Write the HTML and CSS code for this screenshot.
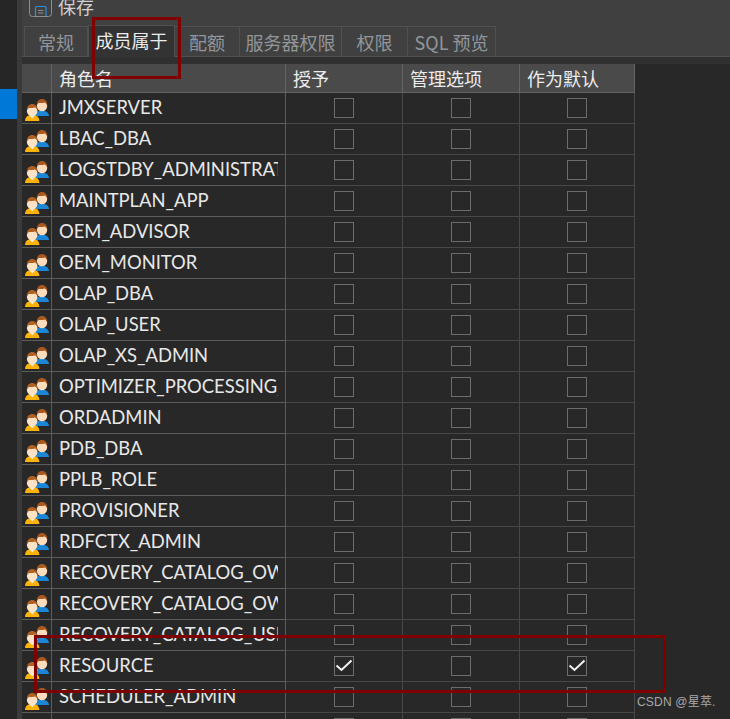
FILE: index.html
```html
<!DOCTYPE html>
<html lang="zh">
<head>
<meta charset="utf-8">
<title>成员属于</title>
<link rel="stylesheet" href="styles.css">
</head>
<body>
<svg width="0" height="0" class="defs">
  <defs>
    <symbol id="role" viewBox="0 0 24 22">
      <path d="M10 17 C10.5 13.5 13 11.5 17 11.5 C21 11.5 23.6 13.8 24 17Z" fill="#1c86d6"/>
      <circle cx="17" cy="7" r="5.2" fill="#fbdcbc"/>
      <path d="M11.8 6.6 C11.4 2.4 14 0 17 0 C20.2 0 22.6 2.4 22.2 6.6 C21.6 4.8 20.6 3.8 19.4 3.6 C17.6 4.2 14.8 4.2 13.8 3.9 C12.8 4.4 12.2 5.2 11.8 6.6Z" fill="#a8571f"/>
      <path d="M0 22 C0.2 18 3 15.8 7.2 15.8 C11.4 15.8 14.2 18 14.4 22Z" fill="#ffb30a"/>
      <path d="M4.4 16.4 L7.2 19.2 L10 16.4Z" fill="#fff3e0"/>
      <circle cx="7.2" cy="12" r="5.3" fill="#fce2c6"/>
      <path d="M1.9 11.6 C1.5 7.4 4.2 5 7.2 5 C10.4 5 12.9 7.4 12.5 11.6 C11.9 9.8 10.9 8.8 9.6 8.6 C7.8 9.2 5.2 9.2 4 8.9 C3 9.4 2.4 10.2 1.9 11.6Z" fill="#b0601f"/>
    </symbol>
  </defs>
</svg>
<div class="app">
  <aside class="rail"><div class="rail-mark"></div></aside>
  <div class="gutter"></div>
  <main class="main">
    <div class="toolbar">
      <svg class="save" viewBox="0 0 23 23" width="23" height="23" fill="none">
        <path d="M.5 -6 H22.5 V19.5 Q22.5 22.5 19.5 22.5 H3.5 Q.5 22.5 .5 19.5Z" stroke="#8a8f94"/>
        <path d="M6.5 0 V7 Q6.5 8.5 8 8.5 H15.5 Q17 8.5 17 7 V0" stroke="#2b8fe6" stroke-width="1.2" transform="translate(0 -5)"/>
        <path d="M6.5 22 V13.5 Q6.5 12.5 8 12.5 H15.5 Q17 12.5 17 13.5 V22" stroke="#2b8fe6" stroke-width="1.2"/>
        <path d="M9 16.5 H14.5 M9 19 H14.5" stroke="#8a8f94"/>
      </svg>
      <span class="save-label">保存</span>
    </div>
    <nav class="tabs">
      <span class="tab t1">常规</span>
      <span class="tab active">成员属于</span>
      <span class="tab t3">配额</span>
      <span class="tab t4">服务器权限</span>
      <span class="tab t5">权限</span>
      <span class="tab t6">SQL 预览</span>
    </nav>
    <div class="strip"></div>
    <table class="grid">
      <colgroup>
        <col class="c-icon"><col class="c-name"><col class="c-a"><col class="c-b"><col class="c-c">
      </colgroup>
      <thead>
        <tr><th></th><th>角色名</th><th>授予</th><th>管理选项</th><th>作为默认</th></tr>
      </thead>
      <tbody>
        <tr><td class="ic"><svg class="role"><use href="#role"/></svg></td><td class="nm"><div class="name">JMXSERVER</div></td><td><span class="box"></span></td><td><span class="box"></span></td><td><span class="box"></span></td></tr>
        <tr><td class="ic"><svg class="role"><use href="#role"/></svg></td><td class="nm"><div class="name">LBAC_DBA</div></td><td><span class="box"></span></td><td><span class="box"></span></td><td><span class="box"></span></td></tr>
        <tr><td class="ic"><svg class="role"><use href="#role"/></svg></td><td class="nm"><div class="name">LOGSTDBY_ADMINISTRATOR</div></td><td><span class="box"></span></td><td><span class="box"></span></td><td><span class="box"></span></td></tr>
        <tr><td class="ic"><svg class="role"><use href="#role"/></svg></td><td class="nm"><div class="name">MAINTPLAN_APP</div></td><td><span class="box"></span></td><td><span class="box"></span></td><td><span class="box"></span></td></tr>
        <tr><td class="ic"><svg class="role"><use href="#role"/></svg></td><td class="nm"><div class="name">OEM_ADVISOR</div></td><td><span class="box"></span></td><td><span class="box"></span></td><td><span class="box"></span></td></tr>
        <tr><td class="ic"><svg class="role"><use href="#role"/></svg></td><td class="nm"><div class="name">OEM_MONITOR</div></td><td><span class="box"></span></td><td><span class="box"></span></td><td><span class="box"></span></td></tr>
        <tr><td class="ic"><svg class="role"><use href="#role"/></svg></td><td class="nm"><div class="name">OLAP_DBA</div></td><td><span class="box"></span></td><td><span class="box"></span></td><td><span class="box"></span></td></tr>
        <tr><td class="ic"><svg class="role"><use href="#role"/></svg></td><td class="nm"><div class="name">OLAP_USER</div></td><td><span class="box"></span></td><td><span class="box"></span></td><td><span class="box"></span></td></tr>
        <tr><td class="ic"><svg class="role"><use href="#role"/></svg></td><td class="nm"><div class="name">OLAP_XS_ADMIN</div></td><td><span class="box"></span></td><td><span class="box"></span></td><td><span class="box"></span></td></tr>
        <tr><td class="ic"><svg class="role"><use href="#role"/></svg></td><td class="nm"><div class="name">OPTIMIZER_PROCESSING_RATE</div></td><td><span class="box"></span></td><td><span class="box"></span></td><td><span class="box"></span></td></tr>
        <tr><td class="ic"><svg class="role"><use href="#role"/></svg></td><td class="nm"><div class="name">ORDADMIN</div></td><td><span class="box"></span></td><td><span class="box"></span></td><td><span class="box"></span></td></tr>
        <tr><td class="ic"><svg class="role"><use href="#role"/></svg></td><td class="nm"><div class="name">PDB_DBA</div></td><td><span class="box"></span></td><td><span class="box"></span></td><td><span class="box"></span></td></tr>
        <tr><td class="ic"><svg class="role"><use href="#role"/></svg></td><td class="nm"><div class="name">PPLB_ROLE</div></td><td><span class="box"></span></td><td><span class="box"></span></td><td><span class="box"></span></td></tr>
        <tr><td class="ic"><svg class="role"><use href="#role"/></svg></td><td class="nm"><div class="name">PROVISIONER</div></td><td><span class="box"></span></td><td><span class="box"></span></td><td><span class="box"></span></td></tr>
        <tr><td class="ic"><svg class="role"><use href="#role"/></svg></td><td class="nm"><div class="name">RDFCTX_ADMIN</div></td><td><span class="box"></span></td><td><span class="box"></span></td><td><span class="box"></span></td></tr>
        <tr><td class="ic"><svg class="role"><use href="#role"/></svg></td><td class="nm"><div class="name">RECOVERY_CATALOG_OWNER</div></td><td><span class="box"></span></td><td><span class="box"></span></td><td><span class="box"></span></td></tr>
        <tr><td class="ic"><svg class="role"><use href="#role"/></svg></td><td class="nm"><div class="name">RECOVERY_CATALOG_OWNER_VPD</div></td><td><span class="box"></span></td><td><span class="box"></span></td><td><span class="box"></span></td></tr>
        <tr><td class="ic"><svg class="role"><use href="#role"/></svg></td><td class="nm"><div class="name">RECOVERY_CATALOG_USER</div></td><td><span class="box"></span></td><td><span class="box"></span></td><td><span class="box"></span></td></tr>
        <tr><td class="ic"><svg class="role"><use href="#role"/></svg></td><td class="nm"><div class="name">RESOURCE</div></td><td><span class="box"><svg class="tick" viewBox="0 0 20 20"><path d="M2.5 9.5 L7.5 14 L17.5 4.5"/></svg></span></td><td><span class="box"></span></td><td><span class="box"><svg class="tick" viewBox="0 0 20 20"><path d="M2.5 9.5 L7.5 14 L17.5 4.5"/></svg></span></td></tr>
        <tr><td class="ic"><svg class="role"><use href="#role"/></svg></td><td class="nm"><div class="name">SCHEDULER_ADMIN</div></td><td><span class="box"></span></td><td><span class="box"></span></td><td><span class="box"></span></td></tr>
        <tr><td class="ic"><svg class="role"><use href="#role"/></svg></td><td class="nm"><div class="name"></div></td><td><span class="box"></span></td><td><span class="box"></span></td><td><span class="box"></span></td></tr>
      </tbody>
    </table>
  </main>
</div>
<div class="mark mark-tab"></div>
<div class="mark mark-row"></div>
<div class="watermark">CSDN @星萃.</div>
</body>
</html>
```

FILE: styles.css
```css
* { box-sizing: border-box; }
html, body { margin: 0; height: 100%; }
body {
  position: relative;
  width: 730px;
  height: 719px;
  overflow: hidden;
  background: #282828;
  font-family: "Lato", "Noto Sans CJK SC", sans-serif;
}
.defs { position: absolute; }
.app { display: flex; height: 719px; }
.rail { width: 17px; background: #262626; padding-top: 89px; flex: none; }
.rail-mark { height: 30px; background: #0078d7; }
.gutter { width: 5px; background: #3a3a3a; flex: none; }
.main { width: 708px; flex: none; }
.toolbar {
  height: 27px;
  background: #404040;
  display: flex;
  align-items: flex-start;
  padding-left: 7px;
  overflow: hidden;
}
.save { flex: none; margin-top: -6px; overflow: hidden; }
.save-label { font-size: 18px; line-height: 18px; margin: -3px 0 0 6px; color: #d0d0d0; font-family: "Noto Sans CJK SC", sans-serif; }
.tabs {
  height: 30px;
  background: #404040;
  border-bottom: 1px solid #505050;
  display: flex;
  align-items: flex-end;
  padding-left: 2px;
  font-family: "Noto Sans CJK SC", sans-serif;
  font-size: 18px;
  color: #92969a;
}
.tab {
  height: 30px;
  border: 1px solid #505050;
  border-bottom: 0;
  border-left: 0;
  display: flex;
  align-items: center;
  justify-content: center;
  line-height: 1;
  flex: none;
}
.tab.t1 { width: 64px; border-left: 1px solid #505050; }
.tab.active { width: 87px; height: 32px; margin-bottom: -1px; padding-bottom: 3px; background: #333; color: #ececec; border-left: 1px solid #505050; }
.tab.t3 { width: 65px; }
.tab.t4 { width: 102px; }
.tab.t5 { width: 66px; }
.tab.t6 { width: 88px; }
.strip { height: 7px; background: #303030; }
.grid {
  border-collapse: separate;
  border-spacing: 0;
  table-layout: fixed;
  width: 613px;
  font-size: 18.4px;
}
.c-icon { width: 30px; }
.c-name { width: 234px; }
.c-a { width: 117px; }
.c-b { width: 117px; }
.c-c { width: 115px; }
.grid th {
  height: 29px;
  padding: 0 0 1px 7px;
  background: #4a4a4a;
  color: #ececec;
  border-right: 1px solid #646464;
  border-bottom: 1px solid #646464;
  font-weight: 400;
  text-align: left;
  font-family: "Noto Sans CJK SC", sans-serif;
  font-size: 18px;
  line-height: 1;
}
.grid td {
  height: 31px;
  padding: 0;
  border-right: 1px solid #484848;
  border-bottom: 1px solid #484848;
  text-align: center;
  color: #e8e8e8;
}
.grid td.ic { border-right-color: #5c5c5c; border-bottom-color: #5c5c5c; padding-left: 3px; }
.grid td.nm { border-right-color: #5c5c5c; border-bottom-color: #5c5c5c; }
.role { display: block; width: 24px; height: 22px; margin-top: 4px; }
.name {
  width: 219px;
  margin-left: 7px;
  white-space: nowrap;
  overflow: hidden;
  text-align: left;
  line-height: 28px;
  padding-bottom: 2px;
}
.box {
  display: block;
  width: 20px;
  height: 20px;
  margin: 0 auto;
  border: 1px solid #6c6c6c;
  position: relative;
}
.tick { position: absolute; left: -1px; top: -1px; width: 20px; height: 20px; fill: none; stroke: #f2f2f2; stroke-width: 2; }
.mark { position: absolute; border: 3px solid #7f0000; pointer-events: none; }
.mark-tab { left: 92px; top: 17px; width: 89px; height: 62px; }
.mark-row { left: 34px; top: 635px; width: 632px; height: 58px; }
.watermark {
  position: absolute;
  left: 637px;
  top: 694px;
  font-family: "Liberation Sans", "Noto Sans CJK SC", sans-serif;
  font-size: 12px;
  line-height: 16px;
  color: #a8a8a8;
  letter-spacing: .2px;
}
```
